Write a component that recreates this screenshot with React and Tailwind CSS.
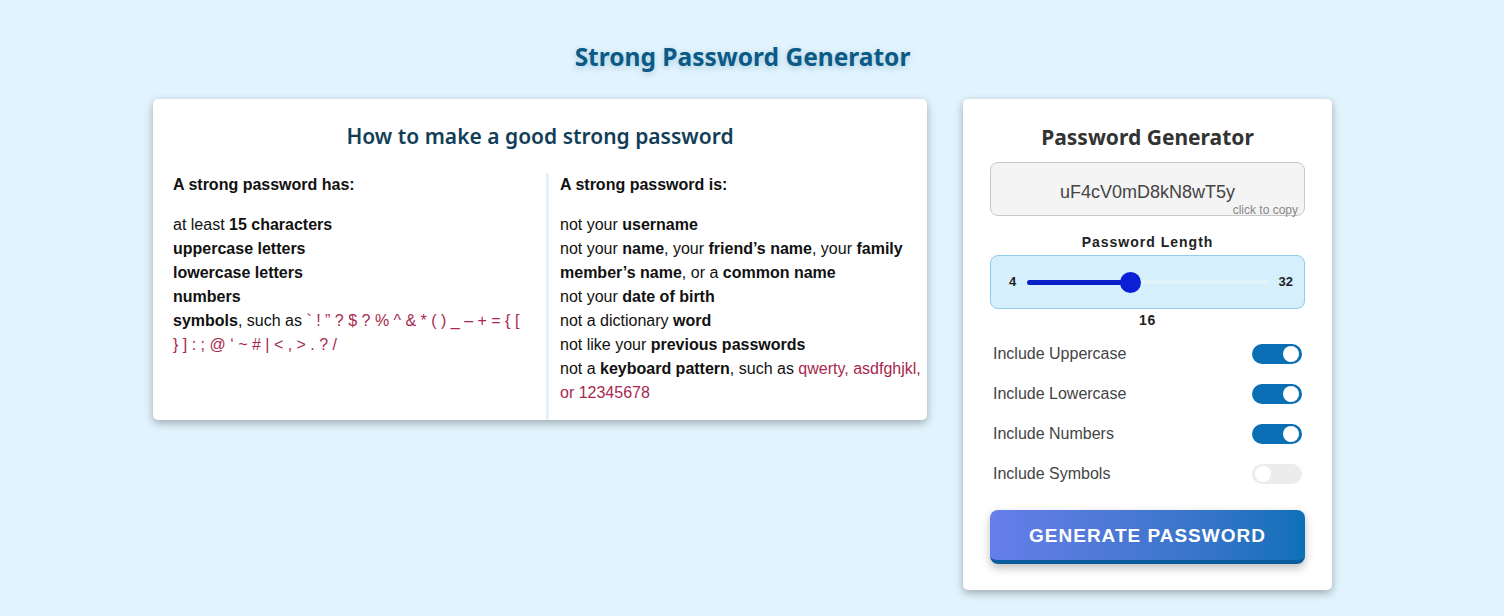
import React from "react";

const headFont = { fontFamily: '"Noto Sans", "Open Sans", sans-serif' };

const Toggle = ({ on }) => (
  <div
    className={`flex items-center w-[50px] h-[20px] rounded-full px-[3px] ${
      on ? "bg-[#0a6fb5] justify-end" : "bg-[#ececec] justify-start"
    }`}
  >
    <div className="w-[16px] h-[16px] rounded-full bg-white" />
  </div>
);

const Option = ({ label, on }) => (
  <div className="flex items-center justify-between h-[40px] pl-[3px] pr-[3px]">
    <span className="text-[16px] text-[#444]">{label}</span>
    <Toggle on={on} />
  </div>
);

const B = ({ children }) => <b className="font-bold">{children}</b>;
const R = ({ children }) => <span className="text-[#a8284d]">{children}</span>;

export default function App() {
  return (
    <div
      className="min-h-[616px] bg-[#e1f3fd] text-[#111]"
      style={{ fontFamily: '"Liberation Sans", Arial, sans-serif' }}
    >
      <div className="w-[1179px] ml-[153px]">
        <h1
          className="pt-[39px] h-[99px] text-center text-[24.5px] font-bold text-[#0b5a86] [text-shadow:0_2px_6px_rgba(11,90,134,0.25)]"
          style={headFont}
        >
          Strong Password Generator
        </h1>

        <div className="flex items-start gap-[36px]">
          {/* info card */}
          <div className="w-[774px] bg-white rounded-[5px] shadow-[0_3px_8px_rgba(0,0,0,0.3)] pl-[20px] pr-[6px]">
            <h2
              className="pt-[22px] h-[75px] text-center text-[21px] font-semibold text-[#123f57] pr-[14px]"
              style={headFont}
            >
              How to make a good strong password
            </h2>
            <div className="flex text-[16px] leading-[24px]">
              <div className="w-[353px] mr-[20px]">
                <p className="font-bold leading-[22px] mb-[17px]">A strong password has:</p>
                <p>
                  at least <B>15 characters</B>
                </p>
                <p>
                  <B>uppercase letters</B>
                </p>
                <p>
                  <B>lowercase letters</B>
                </p>
                <p>
                  <B>numbers</B>
                </p>
                <p>
                  <B>symbols</B>, such as{" "}
                  <R>` ! ” ? $ ? % ^ &amp; * ( ) _ – + = {"{"} [ {"}"} ] : ; @ ‘ ~ # | &lt; , &gt; . ? /</R>
                </p>
              </div>
              <div className="flex-1 border-l-[3px] -mt-px pt-px border-[#e3f2fc] pl-[11px] pb-[15px]">
                <p className="font-bold leading-[22px] mb-[17px]">A strong password is:</p>
                <p>
                  not your <B>username</B>
                </p>
                <p>
                  not your <B>name</B>, your <B>friend’s name</B>, your <B>family member’s name</B>, or a{" "}
                  <B>common name</B>
                </p>
                <p>
                  not your <B>date of birth</B>
                </p>
                <p>
                  not a dictionary <B>word</B>
                </p>
                <p>
                  not like your <B>previous passwords</B>
                </p>
                <p>
                  not a <B>keyboard pattern</B>, such as <R>qwerty, asdfghjkl, or 12345678</R>
                </p>
              </div>
            </div>
          </div>

          {/* generator card */}
          <div className="w-[369px] bg-white rounded-[5px] shadow-[0_3px_8px_rgba(0,0,0,0.3)] px-[27px] pt-[24px] pb-[26px]">
            <h2
              className="text-center text-[21px] font-bold text-[#333] h-[39px] leading-[28px]"
              style={headFont}
            >
              Password Generator
            </h2>
            <div className="flex flex-col h-[54px] rounded-[8px] border border-[#c8c8c8] bg-[#f4f4f4]">
              <div className="flex-1 flex items-end justify-center text-[18px] text-[#444] leading-[20px] pb-[2px]">
                uF4cV0mD8kN8wT5y
              </div>
              <div className="text-right text-[12px] text-[#888] leading-[12px] pr-[6px] pb-0 -mb-px">click to copy</div>
            </div>
            <div className="text-center text-[14px] font-bold tracking-[1px] text-[#222] pt-[17px] pb-[4px] leading-[18px]">
              Password Length
            </div>
            <div className="flex items-center h-[54px] rounded-[8px] border border-[#8fcde9] bg-[#d5effd] pl-[18px] pr-[11px] text-[13px] font-bold text-[#222]">
              <span className="w-[18px]">4</span>
              <div className="flex items-center w-[241px]">
                <div className="w-[103px] h-[5px] rounded-full bg-[#0b1fc9]" />
                <div className="w-[21px] h-[21px] -ml-[10px] rounded-full bg-[#0a1fd6] shrink-0" />
                <div className="flex-1 h-[4px] bg-[#e3f3fd] -mr-px" />
              </div>
              <span className="flex-1 text-right">32</span>
            </div>
            <div className="text-center text-[14px] font-bold tracking-[0.6px] text-[#222] leading-[22px]">16</div>
            <div className="pt-[3px]">
              <Option label="Include Uppercase" on />
              <Option label="Include Lowercase" on />
              <Option label="Include Numbers" on />
              <Option label="Include Symbols" on={false} />
            </div>
            <button className="mt-[16px] w-full h-[54px] rounded-[8px] border-b-[4px] border-[#0a5d9e] bg-gradient-to-r from-[#667eea] to-[#0a70b8] text-white text-[19px] font-bold tracking-[1px] shadow-[0_4px_10px_rgba(0,0,0,0.25)] leading-[50px] pt-px">
              GENERATE PASSWORD
            </button>
          </div>
        </div>
      </div>
    </div>
  );
}
